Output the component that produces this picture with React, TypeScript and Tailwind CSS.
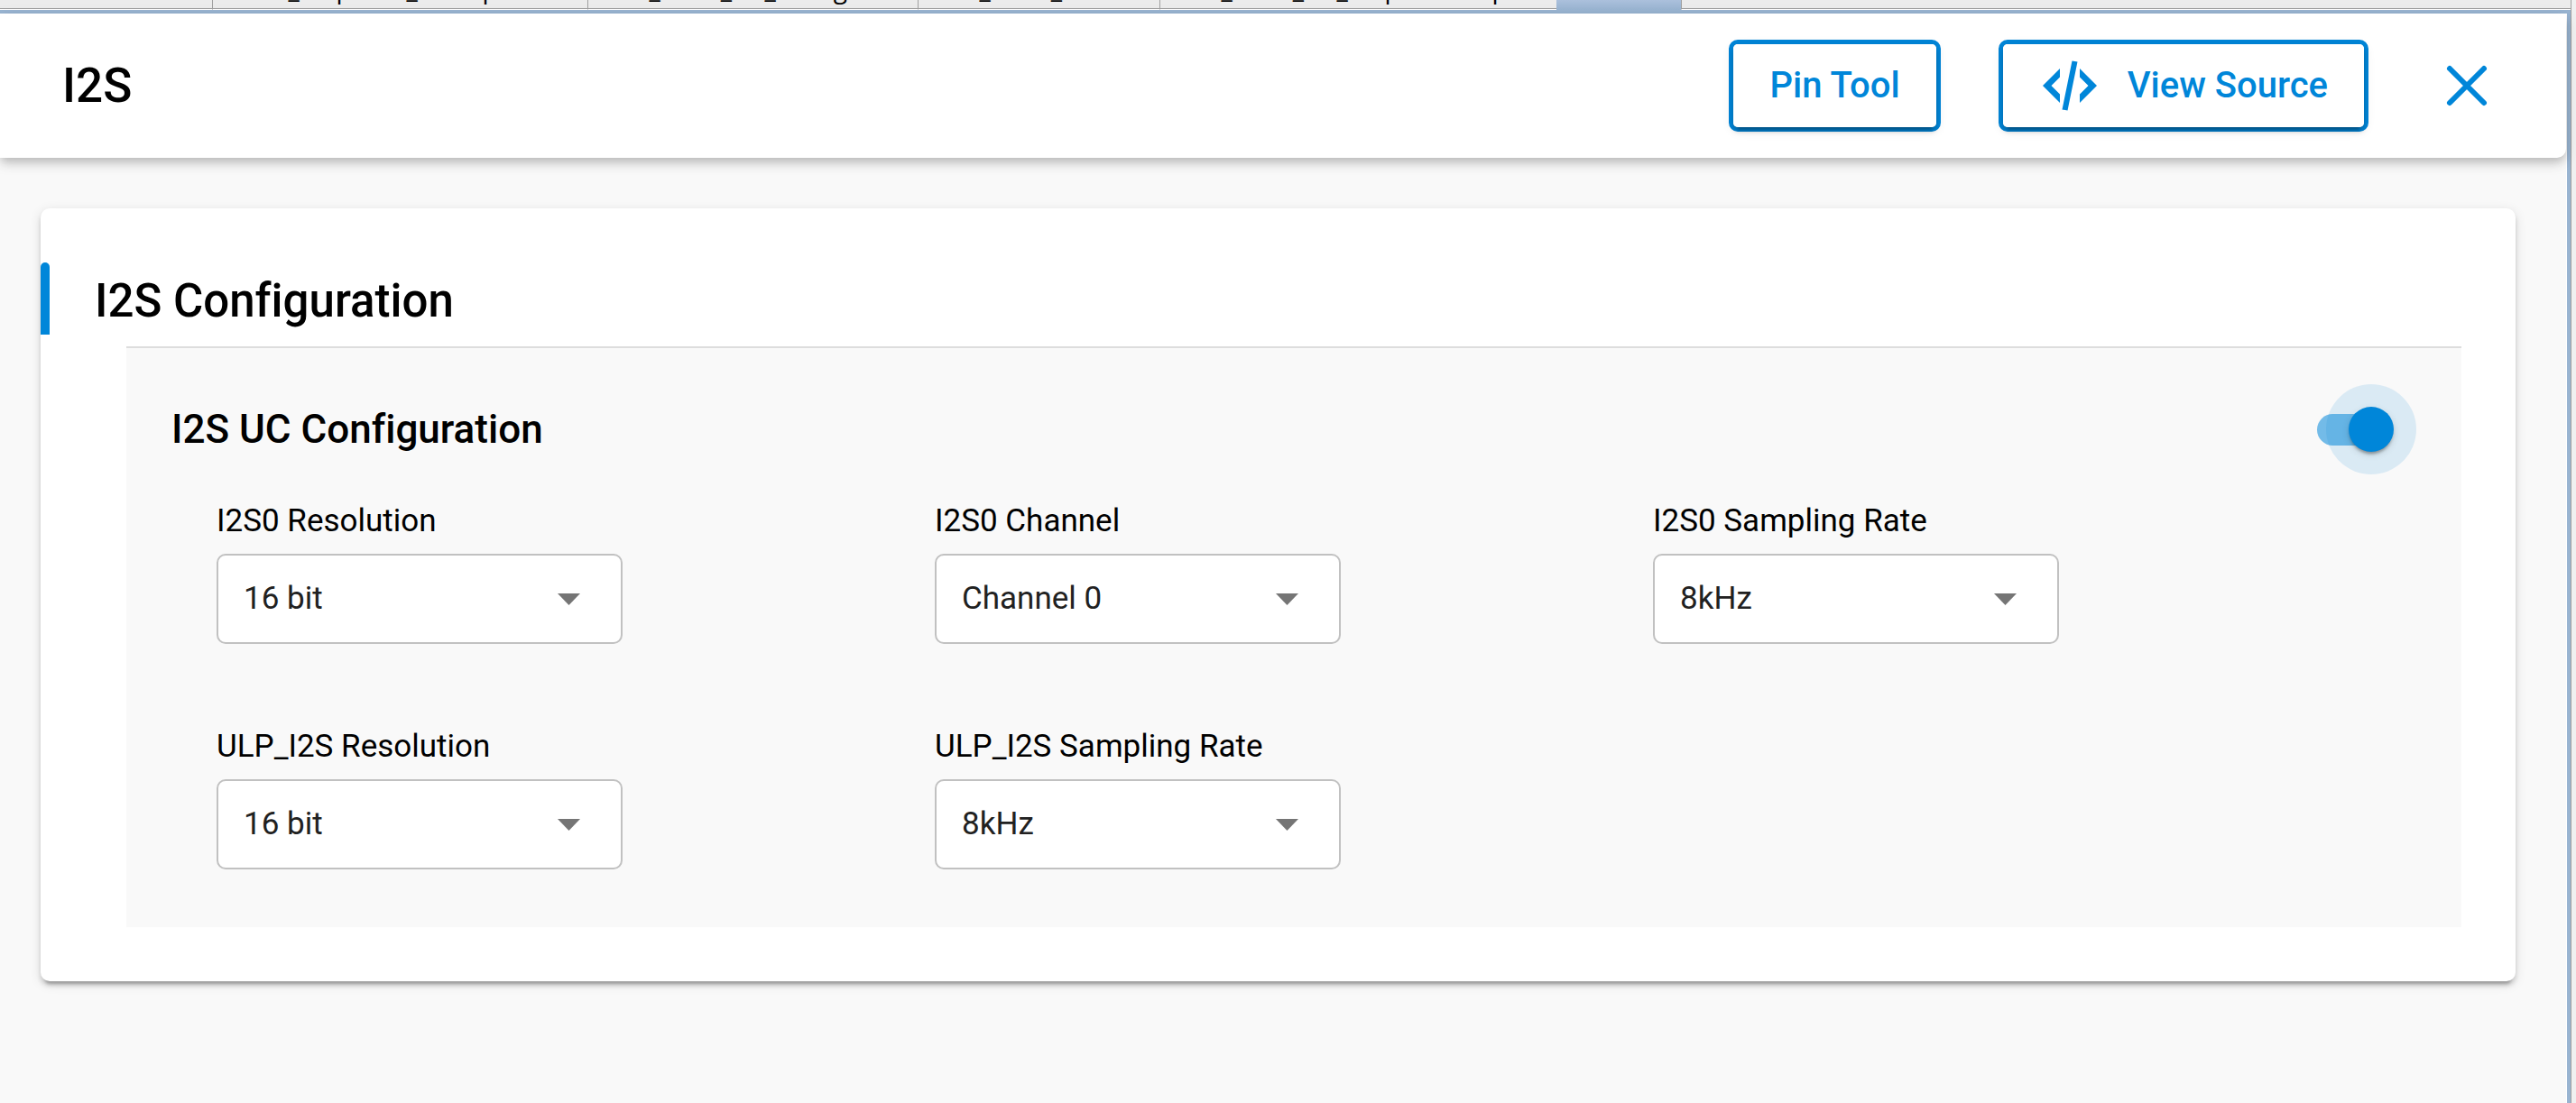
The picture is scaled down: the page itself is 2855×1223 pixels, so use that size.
import React, { useId, useState } from 'react';

const tabs = [
  { name: 'i2s_loopback_example.c', width: 'w-[416px]' },
  { name: 'sl_si91x_i2s_config.h', width: 'w-[366px]' },
  { name: 'sl_si91x_i2s.h', width: 'w-[268px]' },
  { name: 'sl_si91x_i2s_loopback.slcp', width: 'w-[440px]' },
];

const fields = [
  { label: 'I2S0 Resolution', value: '16 bit', options: ['16 bit', '24 bit', '32 bit'] },
  { label: 'I2S0 Channel', value: 'Channel 0', options: ['Channel 0', 'Channel 1'] },
  { label: 'I2S0 Sampling Rate', value: '8kHz', options: ['8kHz', '16kHz', '48kHz'] },
  { label: 'ULP_I2S Resolution', value: '16 bit', options: ['16 bit', '24 bit', '32 bit'] },
  { label: 'ULP_I2S Sampling Rate', value: '8kHz', options: ['8kHz', '16kHz', '48kHz'] },
];

function TabStrip() {
  return (
    <nav className="h-[15px] border-b-4 border-[#99b4d1] bg-[#ececec]" aria-label="Editors">
      <div className="flex h-[11px] overflow-hidden">
        <div className="w-[235px] shrink-0 border-b border-white shadow-[inset_0_-1px_0_#9e9e9e]" />
        {tabs.map((t) => (
          <div
            key={t.name}
            className={`${t.width} flex shrink-0 items-end border-b border-l border-b-white border-l-[#a0a0a0] pb-[5px] pl-[47px] shadow-[inset_0_-1px_0_#9e9e9e]`}
          >
            <span className="font-['Open_Sans',sans-serif] text-[28px] leading-9 whitespace-nowrap text-black">{t.name}</span>
          </div>
        ))}
        <div className="w-[138px] shrink-0 bg-linear-to-b from-[#abc0dc] to-[#99b4d1]" />
        <div className="grow border-b border-l border-b-white border-l-[#a0a0a0] shadow-[inset_0_-1px_0_#9e9e9e]" />
      </div>
    </nav>
  );
}

function OutlineButton({ children }: { children: React.ReactNode }) {
  return (
    <button type="button" className="rounded-[10px] border-5 border-[#0086d9] text-[40px] leading-[92px] font-medium text-[#0086d9]">
      <span className="flex items-center rounded-[5px] bg-white px-10 shadow-[0_8px_3px_-5px_rgba(0,0,0,0.2),0_5px_5px_rgba(0,0,0,0.14),0_3px_13px_rgba(0,0,0,0.12)]">
        {children}
      </span>
    </button>
  );
}

function SelectField({ label, value, options }: { label: string; value: string; options: string[] }) {
  const id = useId();
  return (
    <div className="flex flex-col gap-4">
      <label htmlFor={id} className="text-[35px] leading-[40px] text-black">
        {label}
      </label>
      <div className="relative w-[450px]">
        <select
          id={id}
          defaultValue={value}
          className="h-[100px] w-full appearance-none rounded-[10px] border-2 border-[#c1c1c1] bg-white pr-20 pl-7 text-[35px] text-[#212121]"
        >
          {options.map((o) => (
            <option key={o}>{o}</option>
          ))}
        </select>
        <svg className="pointer-events-none absolute top-11 right-[47px] h-[13px] w-[25px]" viewBox="0 0 25 13" aria-hidden="true">
          <path d="M0 0h25L12.500 13z" fill="#757575" />
        </svg>
      </div>
    </div>
  );
}

function Toggle() {
  const [on, setOn] = useState(true);
  return (
    <label className="relative flex h-[35px] w-20 items-center">
      <input
        type="checkbox"
        role="switch"
        aria-label="I2S UC Configuration"
        checked={on}
        onChange={() => setOn(!on)}
        className="peer h-[35px] w-20 appearance-none rounded-full bg-[#9e9e9e] checked:bg-[#73bbe8]"
      />
      <span className="pointer-events-none absolute -top-[33px] -left-[40px] flex size-[100px] items-center justify-center rounded-full peer-checked:left-[10px] peer-checked:bg-[#0086d9]/12">
        <span className="size-[50px] rounded-full bg-[#0086d9] shadow-[0_5px_3px_-3px_rgba(0,0,0,0.2),0_3px_3px_rgba(0,0,0,0.14),0_3px_8px_rgba(0,0,0,0.12)]" />
      </span>
    </label>
  );
}

export default function App() {
  return (
    <div className="flex min-h-screen flex-col bg-[#f0f0f0] font-[Roboto,sans-serif] text-black [font-variant-ligatures:none]">
      <div className="mr-[5px] flex grow flex-col border-r border-[#a0a0a0]">
        <TabStrip />
        <div className="flex grow flex-col border-r-4 border-[#99b4d1]">
          <div className="flex grow flex-col border-r border-white bg-[#f9f9f9]">
            <header className="flex h-[160px] items-center rounded-br-[10px] bg-white pr-[81px] pl-[69px] shadow-[0_5px_10px_-2px_rgba(0,0,0,0.16),0_8px_13px_rgba(0,0,0,0.1),0_3px_20px_rgba(0,0,0,0.05)]">
              <h1 className="grow text-[53px] leading-[60px] font-medium">I2S</h1>
              <div className="flex items-center gap-16">
                <OutlineButton>Pin Tool</OutlineButton>
                <OutlineButton>
                  <svg className="mr-[34px] ml-1 h-[56px] w-[60px]" viewBox="0 0 60 56" aria-hidden="true">
                    <path
                      d="M0 28 19 9V18.500L9.500 28 19 37.500V47zM60 28 41 9V18.500L50.500 28 41 37.500V47zM32.500 .5 38.500 1.500 27.500 55.500 21.500 54.500z"
                      fill="#0086d9"
                    />
                  </svg>
                  View Source
                </OutlineButton>
              </div>
              <button type="button" aria-label="Close" className="ml-20 p-1">
                <svg className="size-[50px]" viewBox="0 0 50 50" aria-hidden="true">
                  <path d="M6 6 44 44M44 6 6 44" stroke="#0086d9" strokeWidth="6" strokeLinecap="round" />
                </svg>
              </button>
            </header>

            <main className="mt-14 mr-14 ml-[45px] rounded-[10px] bg-white pt-[60px] pb-[60px] shadow-[0_8px_3px_-5px_rgba(0,0,0,0.2),0_5px_5px_rgba(0,0,0,0.14),0_3px_13px_rgba(0,0,0,0.12)]">
              <div className="flex h-20">
                <span className="w-[10px] rounded-t-[5px] bg-[#0086d9]" />
                <h2 className="pt-[13px] pl-[50px] text-[51px] leading-[60px] font-medium">I2S Configuration</h2>
              </div>
              <section className="mt-[13px] mr-[60px] ml-[95px] border-t-2 border-[#dddddd] bg-[#f9f9f9] px-[50px] pt-[60px] pb-[64px]">
                <div className="flex items-center justify-between pr-[30px]">
                  <h3 className="text-[44px] leading-[60px] font-medium">I2S UC Configuration</h3>
                  <Toggle />
                </div>
                <div className="mx-[50px] mt-[52px] grid grid-cols-3 gap-y-[94px]">
                  {fields.map((f) => (
                    <SelectField key={f.label} {...f} />
                  ))}
                </div>
              </section>
            </main>
          </div>
        </div>
      </div>
    </div>
  );
}
